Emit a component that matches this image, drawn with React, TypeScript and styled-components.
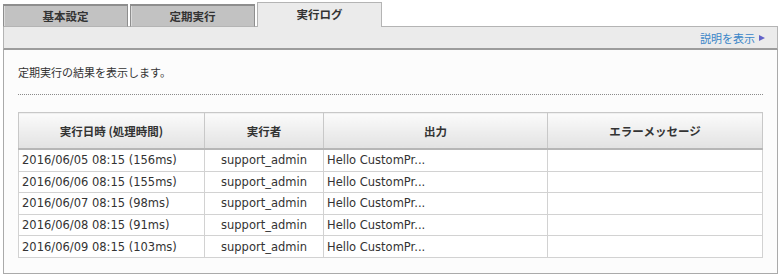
import React from "react";
import styled, { createGlobalStyle } from "styled-components";

const GlobalStyle = createGlobalStyle`
  body {
    margin: 0;
    background: #ffffff;
    font-family: "DejaVu Sans", "Noto Sans CJK JP", sans-serif;
    color: #333333;
  }
`;

const Page = styled.div`
  padding: 3px 3px 0 3px;
  width: 775px;
`;

const TabRow = styled.div`
  display: flex;
  align-items: flex-end;
  gap: 2px;
  height: 24px;
  position: relative;
  z-index: 1;
  margin-bottom: -1px;
`;

const Tab = styled.div<{ $active?: boolean }>`
  box-sizing: border-box;
  width: 125px;
  height: ${(p) => (p.$active ? "25px" : "23px")};
  display: flex;
  align-items: center;
  justify-content: center;
  padding-bottom: ${(p) => (p.$active ? "2px" : "0")};
  font-family: "Noto Sans CJK JP", sans-serif;
  font-size: 11.5px;
  font-weight: bold;
  color: #333333;
  background: ${(p) => (p.$active ? "#ebebeb" : "#c2c2c2")};
  border: 1px solid ${(p) => (p.$active ? "#b4b4b4" : "#8e8e8e")};
  border-top-width: ${(p) => (p.$active ? "1px" : "2px")};
  border-bottom: ${(p) => (p.$active ? "none" : "1px solid #b4b4b4")};
  box-shadow: ${(p) => (p.$active ? "none" : "inset 1px 0 0 #dadada")};
`;

const Bar = styled.div`
  box-sizing: border-box;
  height: 24px;
  background: #ebebeb;
  border: 1px solid #b4b4b4;
  border-bottom: 2px solid #9c9c9c;
  display: flex;
  align-items: center;
  justify-content: flex-end;
  padding-right: 12px;
`;

const HelpLink = styled.a`
  display: flex;
  align-items: center;
  gap: 4px;
  font-family: "Noto Sans CJK JP", sans-serif;
  font-size: 11px;
  color: #3a86c8;
  text-decoration: none;
  cursor: pointer;
`;

const Arrow = styled.span`
  width: 0;
  height: 0;
  border-top: 3.5px solid transparent;
  border-bottom: 3.5px solid transparent;
  border-left: 6px solid #6262c8;
`;

const Content = styled.div`
  box-sizing: border-box;
  background: #fcfcfc;
  border: 1px solid #aaaaaa;
  border-top: none;
  padding: 12px 14px 15px 14px;
`;

const Description = styled.p`
  margin: 0;
  line-height: 20px;
  font-family: "Noto Sans CJK JP", sans-serif;
  font-size: 11px;
  padding-bottom: 12px;
  border-bottom: 1px dotted #8a8a8a;
`;

const Table = styled.table`
  margin-top: 17px;
  width: 744px;
  border-collapse: collapse;
  table-layout: fixed;
  background: #ffffff;
  border: 1px solid #c8c8c8;
`;

const HeadCell = styled.th`
  height: 35px;
  padding: 0;
  font-family: "Noto Sans CJK JP", sans-serif;
  font-size: 11.5px;
  font-weight: bold;
  color: #333333;
  text-align: center;
  background: linear-gradient(#fbfbfb, #e2e2e2);
  border: 1px solid #c8c8c8;
  border-bottom: 2px solid #b6b6b6;
`;

const Cell = styled.td<{ $center?: boolean }>`
  height: 20.6px;
  padding: 0 3px;
  font-size: 11.5px;
  color: #333333;
  text-align: ${(p) => (p.$center ? "center" : "left")};
  border: 1px solid #d2d2d2;
  white-space: nowrap;
  overflow: hidden;
`;

const rows = [
  "2016/06/05 08:15 (156ms)",
  "2016/06/06 08:15 (155ms)",
  "2016/06/07 08:15 (98ms)",
  "2016/06/08 08:15 (91ms)",
  "2016/06/09 08:15 (103ms)",
];

const App = () => {
  return (
    <Page>
      <GlobalStyle />
      <TabRow>
        <Tab>基本設定</Tab>
        <Tab>定期実行</Tab>
        <Tab $active>実行ログ</Tab>
      </TabRow>
      <Bar>
        <HelpLink>
          説明を表示
          <Arrow />
        </HelpLink>
      </Bar>
      <Content>
        <Description>定期実行の結果を表示します。</Description>
        <Table>
          <colgroup>
            <col style={{ width: 186 }} />
            <col style={{ width: 119 }} />
            <col style={{ width: 224 }} />
            <col style={{ width: 215 }} />
          </colgroup>
          <thead>
            <tr>
              <HeadCell>実行日時 (処理時間)</HeadCell>
              <HeadCell>実行者</HeadCell>
              <HeadCell>出力</HeadCell>
              <HeadCell>エラーメッセージ</HeadCell>
            </tr>
          </thead>
          <tbody>
            {rows.map((date) => (
              <tr key={date}>
                <Cell>{date}</Cell>
                <Cell $center>support_admin</Cell>
                <Cell>Hello CustomPr...</Cell>
                <Cell />
              </tr>
            ))}
          </tbody>
        </Table>
      </Content>
    </Page>
  );
};

export default App;
